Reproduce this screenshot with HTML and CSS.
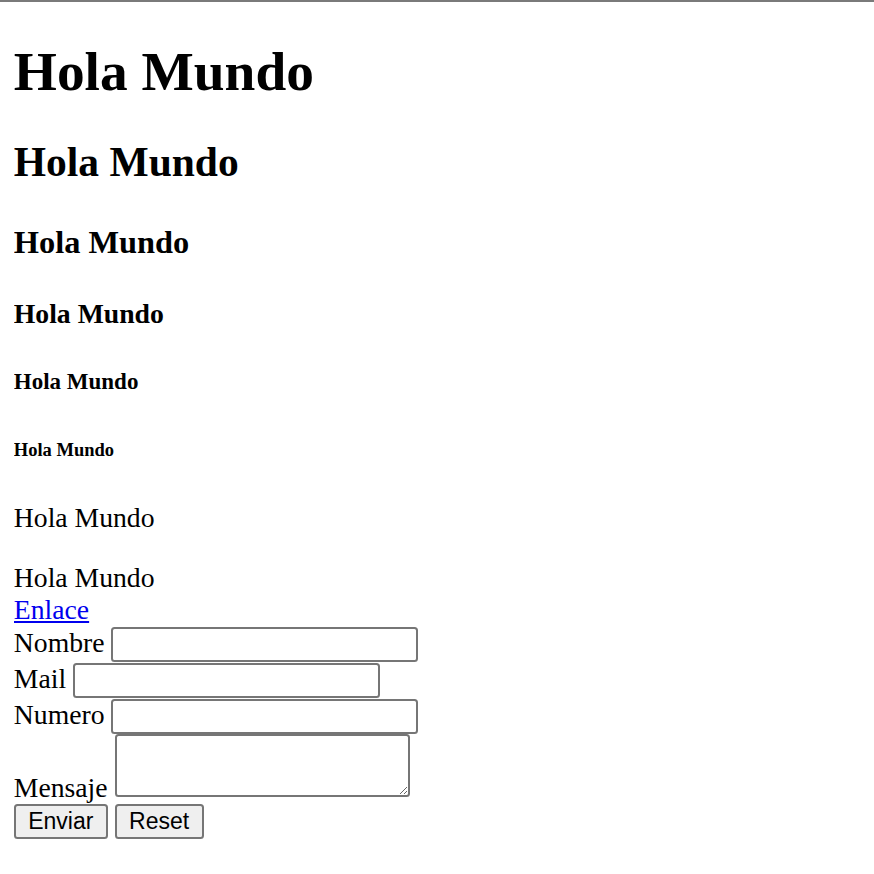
FILE: index.html
```html
<!DOCTYPE html>
<html lang="es">
<head>
<meta charset="utf-8">
<title>Hola Mundo</title>
<link rel="stylesheet" href="styles.css">
</head>
<body class="page">
<div class="frame-line"></div>
<h1 class="t1">Hola Mundo</h1>
<h2 class="t2">Hola Mundo</h2>
<h3 class="t3">Hola Mundo</h3>
<h4 class="t4">Hola Mundo</h4>
<h5 class="t5">Hola Mundo</h5>
<h6 class="t6">Hola Mundo</h6>
<p class="para">Hola Mundo</p>
<div class="block">Hola Mundo<br><a class="link" href="#">Enlace</a></div>
<form class="form">
Nombre <input class="field" type="text"><br>
Mail <input class="field" type="text"><br>
Numero <input class="field" type="text"><br>
Mensaje <textarea class="area"></textarea><br>
<button class="btn" type="submit">Enviar</button> <button class="btn" type="reset">Reset</button>
</form>
</body>
</html>
```
FILE: styles.css
```css
html {
  background: #ffffff;
}
.page {
  margin: 13.8px;
  font-family: "Liberation Serif", "Times New Roman", serif;
  font-size: 27.7px;
  color: #000000;
}
.frame-line {
  position: fixed;
  top: 0;
  left: 0;
  right: 0;
  height: 2px;
  background: #7a7a7a;
}
.t1, .t2, .t3, .t4, .t5, .t6 {
  font-weight: bold;
}
.t1 { font-size: 55.4px; margin: 26.5px 0 35.1px; }
.t2 { font-size: 41.5px; margin: 34.5px 0 37.5px; }
.t3 { font-size: 32.4px; margin: 32.4px 0; }
.t4 { font-size: 27.7px; margin: 36.9px 0; }
.t5 { font-size: 23px; margin: 39.5px 0 38.5px; }
.t6 { font-size: 18.5px; margin: 44.4px 0 41.4px; }
.para { margin: 27.7px 0; }
.block { margin: 0; }
.link {
  color: #0000ee;
  text-decoration: underline;
}
.form { margin: 0; }
.field {
  box-sizing: border-box;
  width: 307px;
  height: 35px;
  margin: 1px 0 0;
  padding: 1.7px 3.5px;
  border: 2px solid #767676;
  border-radius: 3.5px;
  font-family: "Liberation Sans", Arial, sans-serif;
  font-size: 23px;
  background: #ffffff;
}
.area {
  box-sizing: border-box;
  width: 295px;
  height: 63px;
  margin: 0;
  padding: 3.5px;
  border: 2px solid #767676;
  border-radius: 3.5px;
  font-family: "Liberation Mono", monospace;
  font-size: 23px;
  background: #ffffff;
  vertical-align: baseline;
}
.btn {
  box-sizing: border-box;
  height: 35px;
  margin: 0;
  padding: 1.7px 12.4px;
  border: 2px solid #767676;
  border-radius: 3.5px;
  background: #efefef;
  font-family: "Liberation Sans", Arial, sans-serif;
  font-size: 23px;
  color: #000000;
}
```
